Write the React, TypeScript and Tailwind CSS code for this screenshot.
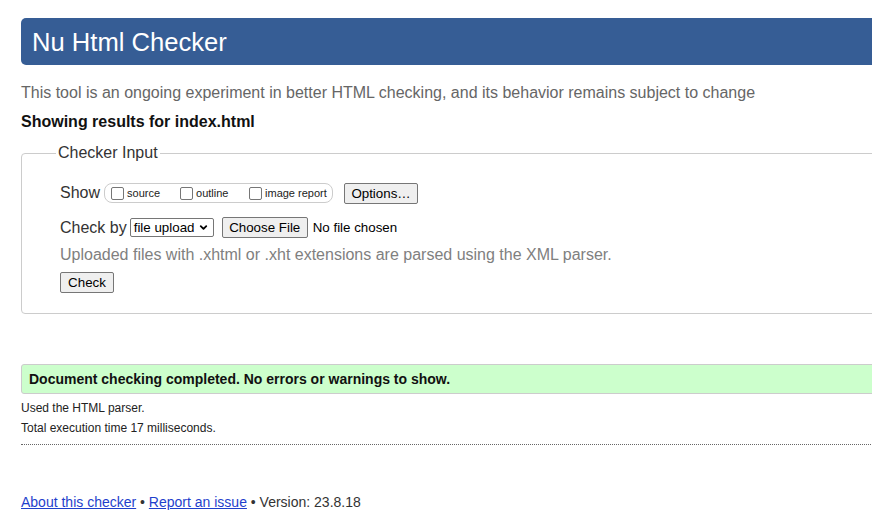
import { ChevronDown } from 'lucide-react';

const font = { fontFamily: '"Liberation Sans", Arial, sans-serif' };

function Box() {
  return <span className="inline-block w-[13px] h-[13px] rounded-[2px] border border-[#767676] bg-white shrink-0" />;
}

function Btn({ children, className = '' }: { children: React.ReactNode; className?: string }) {
  return (
    <button
      className={`h-[21px] rounded-[2px] border border-[#767676] bg-[#efefef] text-[13.33px] leading-[19px] text-black whitespace-nowrap flex items-center justify-center ${className}`}
    >
      {children}
    </button>
  );
}

export default function App() {
  return (
    <div className="w-full overflow-hidden bg-white text-[#222]" style={font}>
      <div className="w-[900px] ml-[21px] pb-[20px]">
        <div className="mt-[18px] h-[47px] rounded-l-[5px] bg-[#365d95] flex items-center pl-[11px]">
          <h1 className="text-[25.6px] leading-[30px] text-white">Nu Html Checker</h1>
        </div>

        <p className="mt-[19px] h-[18px] text-[16px] leading-[18px] text-[#666]">
          This tool is an ongoing experiment in better HTML checking, and its behavior remains subject to change
        </p>
        <p className="mt-[11px] h-[18px] text-[16px] leading-[18px] font-bold text-[#111]">
          Showing results for index.html
        </p>

        <fieldset className="mt-[13px] rounded-l-[4px] border border-[#ccc] pl-[38px] pb-[20px]">
          <legend className="ml-[-4px] px-[2px] text-[16px] leading-[18px] text-[#333]">Checker Input</legend>

          <div className="mt-[20px] h-[22px] flex items-center">
            <span className="text-[16px] text-[#333]">Show</span>
            <div className="ml-[4px] h-[20px] w-[229px] rounded-[8px] border border-[#ccc] flex items-center pl-[6px]">
              <Box />
              <span className="ml-[3px] mt-[1px] text-[11px] text-[#222] w-[53px]">source</span>
              <Box />
              <span className="ml-[3px] mt-[1px] text-[11px] text-[#222] w-[53px]">outline</span>
              <Box />
              <span className="ml-[3px] mt-[1px] text-[11px] text-[#222] whitespace-nowrap">image report</span>
            </div>
            <Btn className="ml-[11px] w-[74px]">Options…</Btn>
          </div>

          <div className="mt-[13px] h-[21px] flex items-center">
            <span className="text-[16px] text-[#333]">Check by</span>
            <div className="ml-[3px] h-[19px] w-[84px] rounded-[2px] border border-[#767676] bg-white flex items-center pl-[3px] pr-[4px] justify-between">
              <span className="text-[13.33px] leading-[16px] text-black whitespace-nowrap">file upload</span>
              <ChevronDown size={11} strokeWidth={4} className="text-black shrink-0" />
            </div>
            <Btn className="ml-[8px] w-[86px] h-[20px]">Choose File</Btn>
            <span className="ml-[5px] text-[13.33px] text-black whitespace-nowrap">No file chosen</span>
          </div>

          <p className="mt-[8px] h-[18px] text-[16px] leading-[18px] text-[#808080]">
            Uploaded files with .xhtml or .xht extensions are parsed using the XML parser.
          </p>

          <Btn className="mt-[8px] w-[54px] h-[20px]">Check</Btn>
        </fieldset>

        <div className="mt-[50px] h-[30px] rounded-l-[3px] border border-[#ccc] bg-[#ccffcc] flex items-center pl-[7px]">
          <span className="text-[14px] font-bold text-[#111]">Document checking completed. No errors or warnings to show.</span>
        </div>

        <p className="mt-[7px] text-[12px] leading-[14px] text-[#222]">Used the HTML parser.</p>
        <p className="mt-[6px] text-[12px] leading-[14px] text-[#222]">Total execution time 17 milliseconds.</p>
        <div className="mt-[9px] border-t border-dotted border-[#666]" />

        <p className="mt-[49px] text-[14px] leading-[16px] text-[#333]">
          <a href="#" className="underline text-[#1f3fcc]">About this checker</a>
          {' • '}
          <a href="#" className="underline text-[#1f3fcc]">Report an issue</a>
          {' • Version: 23.8.18'}
        </p>
      </div>
    </div>
  );
}
